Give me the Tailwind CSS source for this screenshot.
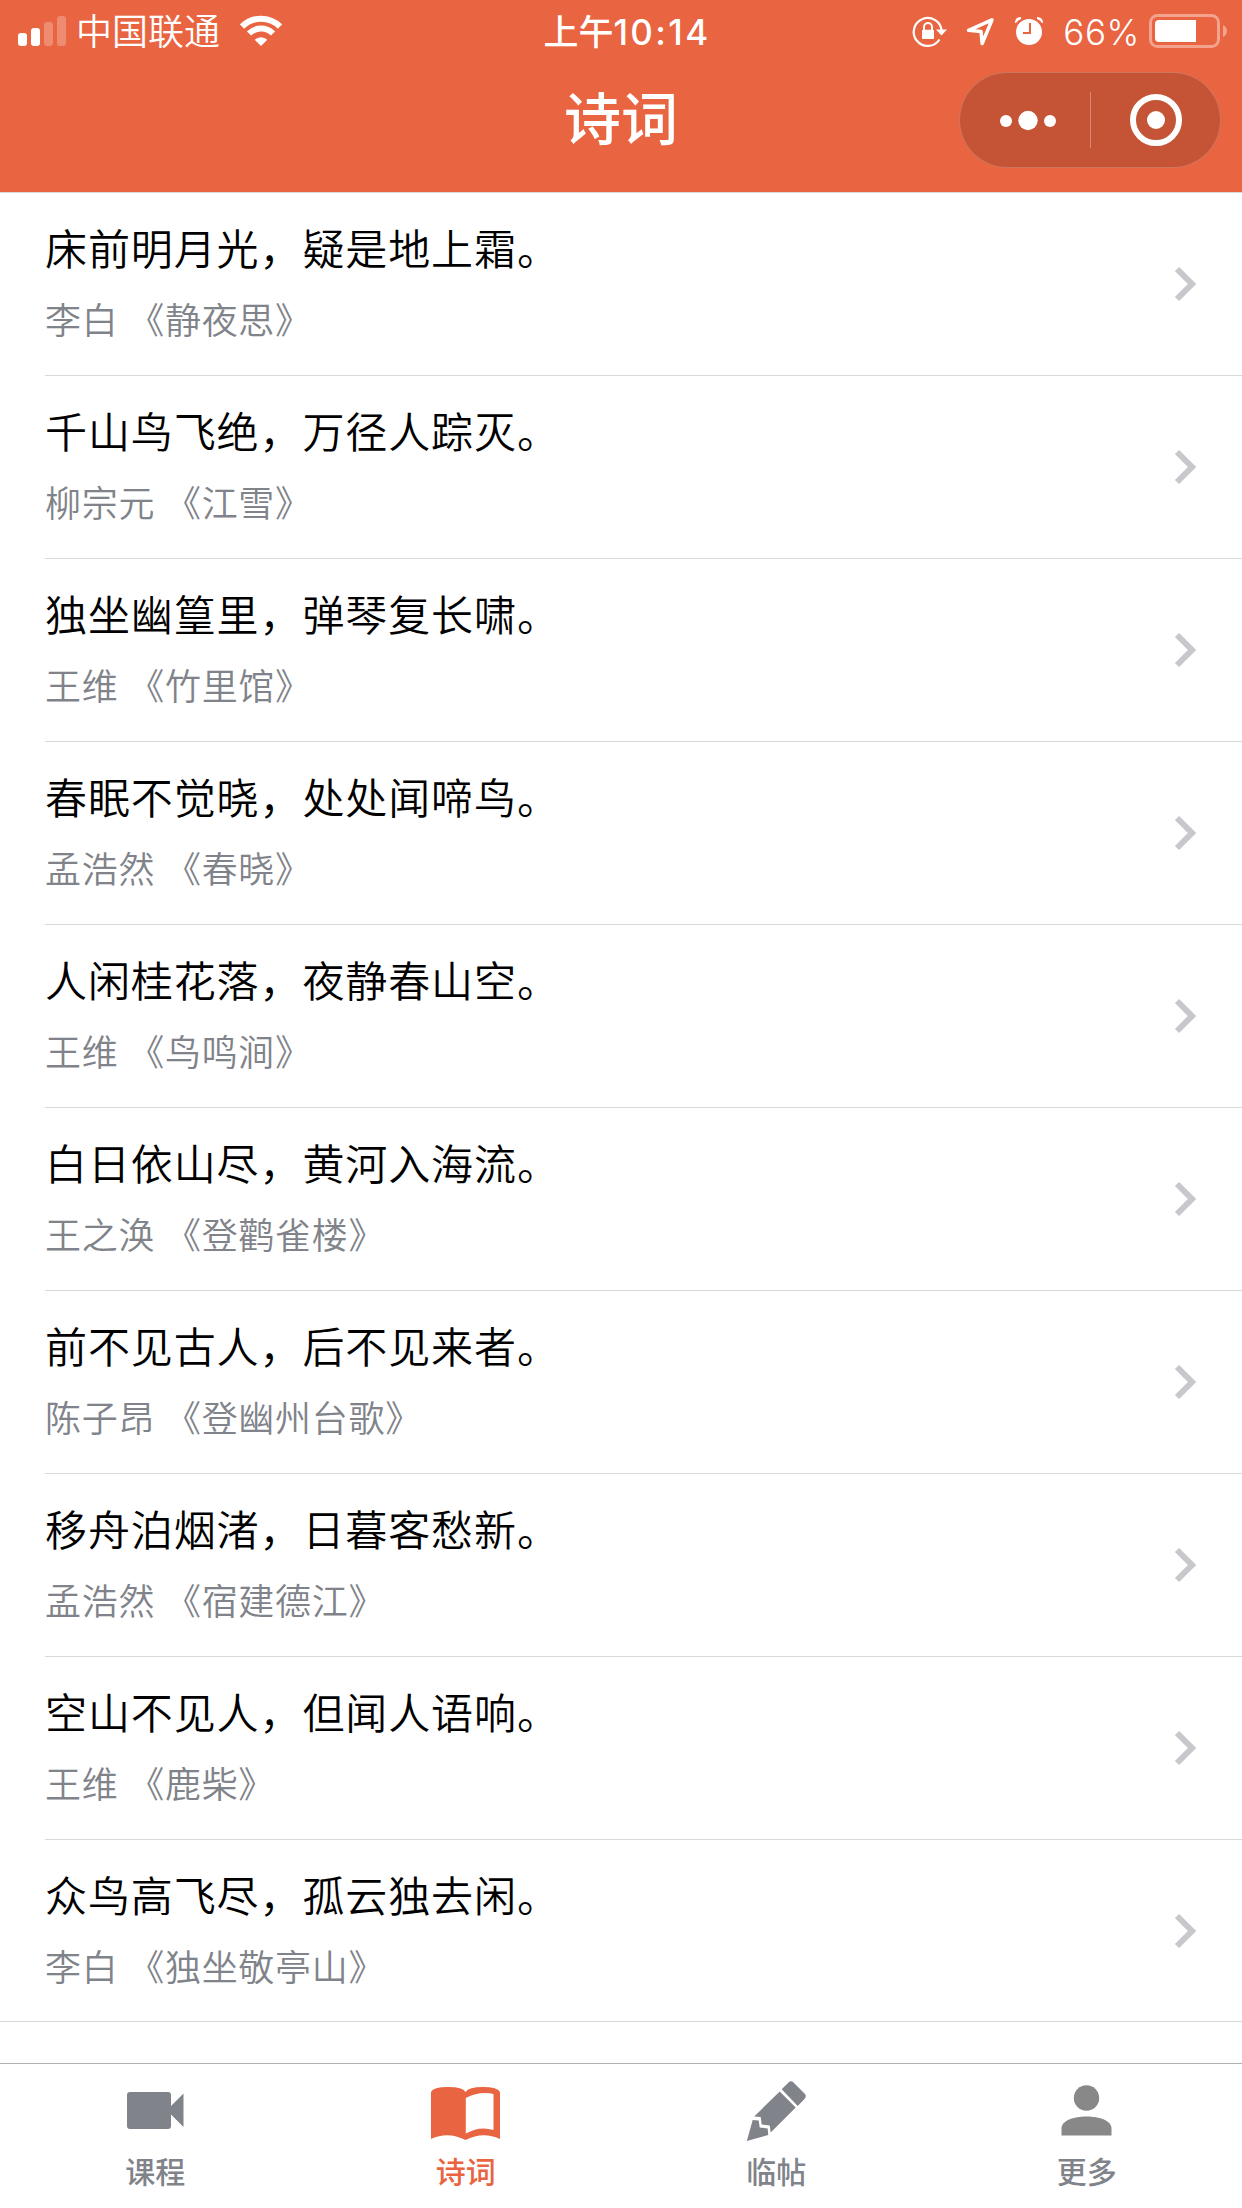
<!DOCTYPE html>
<html lang="zh-CN">
  <head>
    <meta charset="UTF-8" />
    <meta name="viewport" content="width=device-width, initial-scale=1.0" />
    <title>诗词</title>
    <script src="https://cdn.jsdelivr.net/npm/@tailwindcss/browser@4"></script>
  </head>
  <body class="bg-white font-['Inter','Noto_Sans_CJK_SC',sans-serif]">
    <div class="w-[1242px] h-[2208px] flex flex-col overflow-hidden">
      <header class="h-[192px] shrink-0 bg-[#e96441] text-white flex flex-col">
        <!-- status bar -->
        <div class="h-[60px] grid grid-cols-[1fr_auto_1fr] items-center">
          <div class="flex items-center pl-[18px]">
            <svg class="w-12 h-[60px]" viewBox="18 0 48 60" fill="currentColor">
              <rect x="18" y="32" width="9" height="13" rx="3" />
              <rect x="31" y="27" width="9" height="18" rx="3" />
              <rect x="44" y="21" width="9" height="24" rx="3" opacity=".25" />
              <rect x="57" y="15" width="9" height="30" rx="3" opacity=".25" />
            </svg>
            <span class="ml-[10px] pt-0.5 text-4xl leading-[60px] font-[350]">中国联通</span>
            <svg class="ml-5 w-[42px] h-[60px]" viewBox="240 0 42 60" fill="none" stroke="currentColor">
              <path d="M242 25.500a27 27 0 0 1 38 0" stroke-width="6" />
              <path d="M249 32.500a17 17 0 0 1 24 0" stroke-width="6" />
              <path d="M261 45l-6.300-6.300a9 9 0 0 1 12.600 0z" fill="currentColor" stroke="none" />
            </svg>
          </div>
          <div class="pl-3 pt-0.5 text-[35px] leading-[60px] font-medium whitespace-nowrap">上午<span class="tracking-[2.4px]">10:14</span></div>
          <div class="flex items-center justify-end pr-[15px]">
            <svg class="w-[134px] h-[60px]" viewBox="912 0 134 60" fill="none" stroke="currentColor">
              <path d="M940.500 38.500A14 14 0 1 1 942.700 30" stroke-width="2.200" />
              <path d="M937 28.500h11l-5.500 6z" fill="currentColor" stroke="none" />
              <rect x="923" y="28.700" width="12" height="9.300" rx="1" fill="currentColor" stroke="none" />
              <path d="M925 30v-4a4 4 0 0 1 8 0v4" stroke-width="2" />
              <path d="M993 18.800L969.500 29.300l12.500 1.200 1.200 12z" stroke-width="3.500" stroke-linejoin="round" />
              <circle cx="1030" cy="31" r="13" fill="currentColor" stroke="none" />
              <path d="M1016 22q0-6 6-6v2q-3 1-5 4zM1044 22q0-6-6-6v2q3 1 5 4z" fill="currentColor" stroke="none" />
              <path d="M1031 22v10h-7" stroke="#e96441" stroke-width="2" />
            </svg>
            <span class="ml-[18px] mr-[9px] pt-0.5 text-[35px] leading-[60px] font-light tracking-[0.6px]">66%</span>
            <svg class="w-[78px] h-[60px]" viewBox="1149 0 78 60" fill="currentColor">
              <rect x="1150.500" y="14.500" width="68" height="31" rx="7" fill="none" stroke="currentColor" stroke-width="3" opacity=".4" />
              <path d="M1159 19h37v22h-37a4 4 0 0 1-4-4V23a4 4 0 0 1 4-4z" />
              <path d="M1223 24q4 2 4 6t-4 6z" opacity=".4" />
            </svg>
          </div>
        </div>
        <!-- navigation bar -->
        <div class="h-[120px] grid grid-cols-3 items-center">
          <h1 class="col-start-2 pb-px text-center text-[57px] leading-[84px] font-medium">诗词</h1>
          <div class="justify-self-end mr-[21px] w-[262px] h-24 rounded-full bg-[#c45435] border border-white/20 flex items-center">
            <svg class="w-full h-full" viewBox="960 73 260 94" fill="currentColor">
              <circle cx="1006" cy="121" r="6" />
              <circle cx="1028" cy="120.500" r="9.700" />
              <circle cx="1050" cy="121" r="6" />
              <rect x="1090" y="92" width="1" height="56" opacity=".3" />
              <circle cx="1156" cy="120" r="23" fill="none" stroke="currentColor" stroke-width="6" />
              <circle cx="1156" cy="120" r="9" />
            </svg>
          </div>
        </div>
      </header>

      <main class="flex-1 border-t border-[#d9d9d9]">
        <ul id="poemList" class="border-b border-[#d9d9d9]"></ul>
      </main>

      <nav class="h-[145px] shrink-0 border-t border-[#b2b2b2] grid grid-cols-4 text-[#808389] text-[30px] leading-[44px] font-medium">
        <a class="flex flex-col items-center">
          <svg class="w-20 h-[86px]" viewBox="115 2064 80 86" fill="currentColor">
            <rect x="127" y="2092" width="44" height="37" rx="3" />
            <path d="M170 2107l13.500-13.500v33.500l-13.500-13.500z" />
          </svg>
          <span>课程</span>
        </a>
        <a class="flex flex-col items-center text-[#e96441]">
          <svg class="w-20 h-[86px]" viewBox="426 2064 80 86" fill="currentColor">
            <path fill-rule="evenodd" d="M431 2092q2-5 17-5t17.500 5q3-5 17.500-5t17 5v47q-17-8-34.500 1q-17.500-9-34.500-1zM465.800 2098v35.500q14-8 27.700-3.500v-36q-14-3-27.700 4z" />
          </svg>
          <span>诗词</span>
        </a>
        <a class="flex flex-col items-center">
          <svg class="w-20 h-[86px]" viewBox="736 2064 80 86" fill="currentColor">
            <path d="M781.700 2089.300l6.800-6.800q2.500-2.500 5 0l11 11q2.500 2.500 0 5.500l-6.800 7z" />
            <path d="M779.700 2091.500l16 16-25 25-1-7-8-1-1-7.500-6.500-0.500z" />
            <path d="M752.700 2120l6 0.500 1 7 8 1 0.500 6.500-21.400 6z" />
          </svg>
          <span>临帖</span>
        </a>
        <a class="flex flex-col items-center">
          <svg class="w-20 h-[86px]" viewBox="1047 2064 80 86" fill="#888888">
            <circle cx="1086.500" cy="2098" r="12.700" />
            <path d="M1061.500 2135.500v-7c0-8 12-12 25-12s25 4 25 12v7z" />
          </svg>
          <span>更多</span>
        </a>
      </nav>
    </div>

    <script>
      const poems = [
        ['床前明月光，疑是地上霜。', '李白 《静夜思》'],
        ['千山鸟飞绝，万径人踪灭。', '柳宗元 《江雪》'],
        ['独坐幽篁里，弹琴复长啸。', '王维 《竹里馆》'],
        ['春眠不觉晓，处处闻啼鸟。', '孟浩然 《春晓》'],
        ['人闲桂花落，夜静春山空。', '王维 《鸟鸣涧》'],
        ['白日依山尽，黄河入海流。', '王之涣 《登鹳雀楼》'],
        ['前不见古人，后不见来者。', '陈子昂 《登幽州台歌》'],
        ['移舟泊烟渚，日暮客愁新。', '孟浩然 《宿建德江》'],
        ['空山不见人，但闻人语响。', '王维 《鹿柴》'],
        ['众鸟高飞尽，孤云独去闲。', '李白 《独坐敬亭山》'],
      ];

      document.getElementById('poemList').innerHTML = poems.map(([line, source]) => `
        <li class="ml-[45px] h-[183px] last:h-[181px] border-b border-[#d9d9d9] last:border-b-0 flex items-center justify-between pr-[45px]">
          <div>
            <p class="text-[42px] leading-[60px] tracking-[0.9px] font-[350] text-black">${line}</p>
            <p class="mt-[15px] mb-px text-4xl leading-[52px] tracking-[0.7px] [word-spacing:-1px] font-[350] text-[#808389]">${source}</p>
          </div>
          <svg class="w-6 h-9" viewBox="0 0 24 36" fill="none" stroke="#c7c7cc" stroke-width="6">
            <path d="M4 3l15 15-15 15" />
          </svg>
        </li>`).join('');
    </script>
  </body>
</html>
